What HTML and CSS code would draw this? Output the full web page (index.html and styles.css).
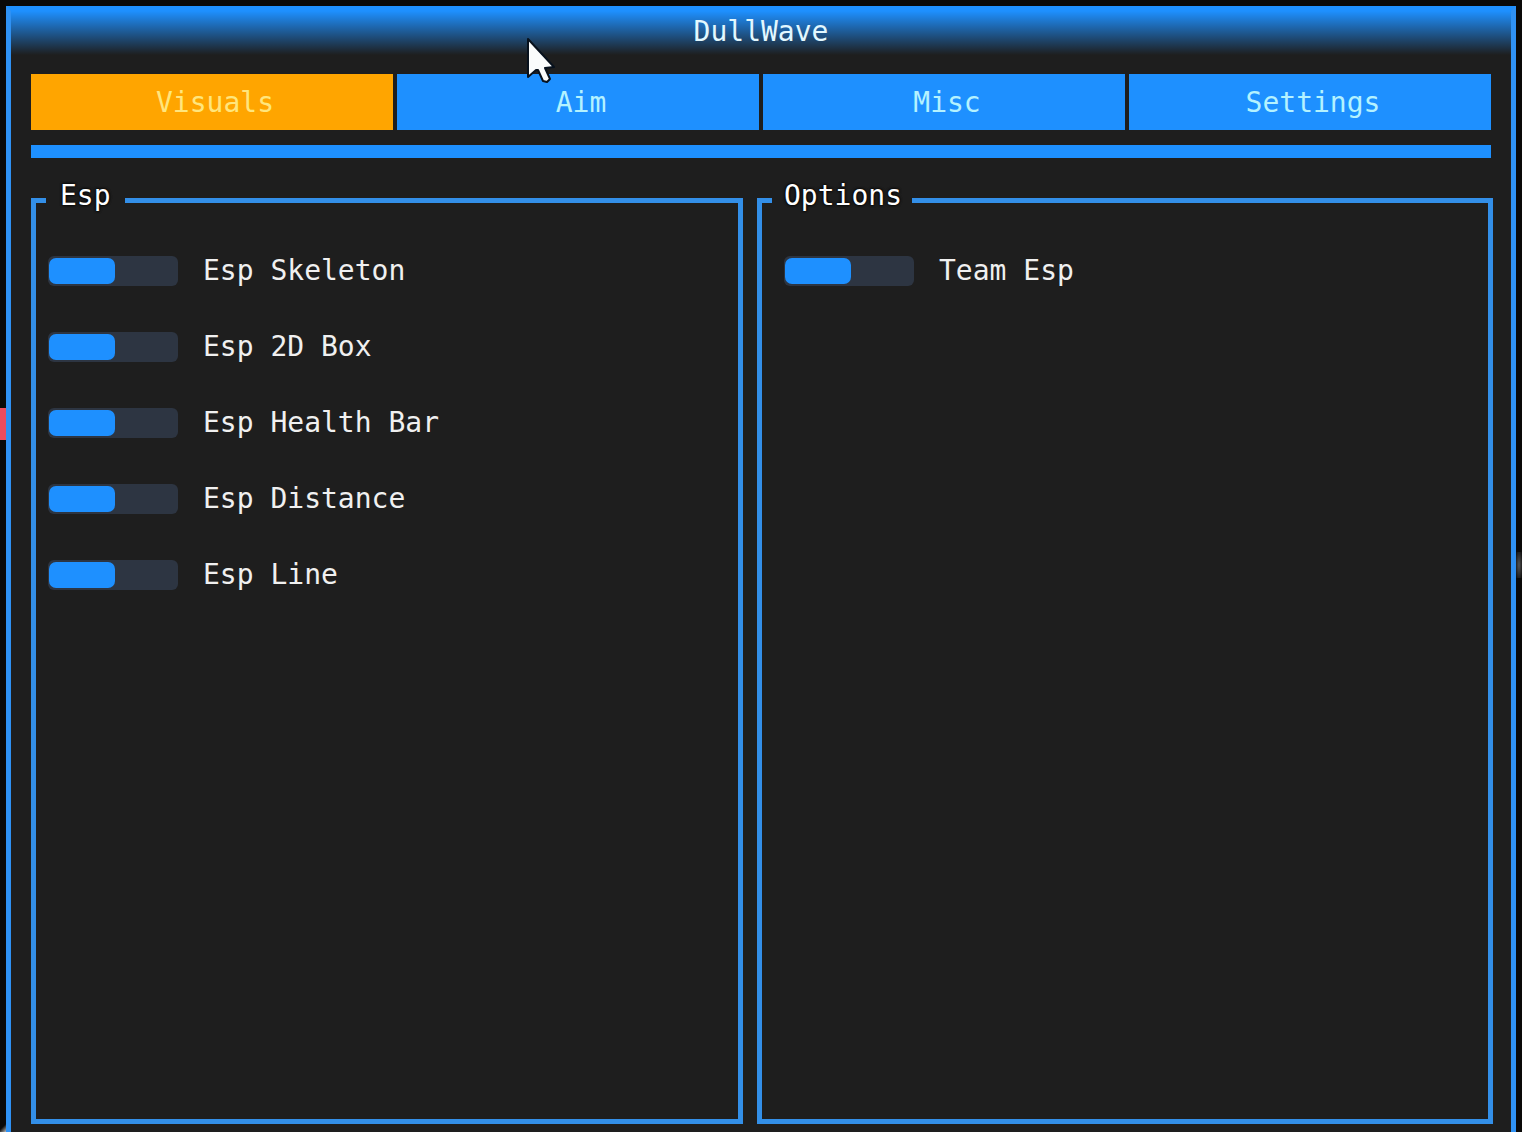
FILE: index.html
```html
<!DOCTYPE html>
<html lang="en">
<head>
<meta charset="utf-8">
<meta name="viewport" content="width=device-width, initial-scale=1">
<title>DullWave</title>
<link rel="stylesheet" href="styles.css">
</head>
<body>
<main class="window">
  <header class="titlebar"><h1 class="title">DullWave</h1></header>
  <nav class="tabs">
    <button class="tab tab-active" type="button">Visuals</button>
    <button class="tab" type="button">Aim</button>
    <button class="tab" type="button">Misc</button>
    <button class="tab" type="button">Settings</button>
  </nav>
  <div class="divider"></div>
  <div class="groups">
    <fieldset class="group">
      <legend class="legend">Esp</legend>
      <div class="options">
        <label class="option"><input class="toggle" type="checkbox">Esp Skeleton</label>
        <label class="option"><input class="toggle" type="checkbox">Esp 2D Box</label>
        <label class="option"><input class="toggle" type="checkbox">Esp Health Bar</label>
        <label class="option"><input class="toggle" type="checkbox">Esp Distance</label>
        <label class="option"><input class="toggle" type="checkbox">Esp Line</label>
      </div>
    </fieldset>
    <fieldset class="group group-wide">
      <legend class="legend">Options</legend>
      <div class="options">
        <label class="option"><input class="toggle" type="checkbox">Team Esp</label>
      </div>
    </fieldset>
  </div>
</main>
<div class="scene scene-red"></div>
<div class="scene scene-grey"></div>
<div class="scene scene-white"></div>
<svg class="cursor" width="32" height="48" viewBox="0 0 32 48" aria-hidden="true">
  <path d="M2 2V40L10 33H12L17 44L21 45L24 42L19 31L28 30Z" fill="#fafcfc" stroke="#07111d" stroke-width="2" stroke-linejoin="round"/>
</svg>
</body>
</html>
```
FILE: styles.css
```css
* {
  box-sizing: border-box;
}

body {
  position: relative;
  height: 100vh;
  margin: 0;
  padding: 6px 6px 0;
  overflow: hidden;
  background: #0a0908;
  color: #f0f0f0;
  font: 28px/32px "DejaVu Sans Mono", monospace;
}

.window {
  display: flex;
  flex-direction: column;
  height: 100%;
  padding-bottom: 8px;
  border: 5px solid #2f91f3;
  border-top-color: #1e90ff;
  border-bottom: 0;
  background: #1e1e1e;
}

.titlebar {
  height: 44px;
  padding-top: 5px;
  background: linear-gradient(#1e90ff, #1e1e1e);
  text-align: center;
}

.title {
  margin: 0;
  color: #e2f8ff;
  font: inherit;
}

.tabs {
  display: grid;
  grid-template-columns: repeat(4, 1fr);
  gap: 4px;
  margin: 19px 20px 15px;
}

.tab {
  height: 56px;
  padding: 2px 0 0 6px;
  border: 0;
  background: #1e90ff;
  color: #b4f2ff;
  font: inherit;
}

.tab-active {
  background: #ffa500;
  color: #ffe67d;
}

.divider {
  height: 13px;
  margin: 0 20px 22px;
  background: #1e90ff;
}

.groups {
  display: grid;
  flex: 1;
  grid-template-columns: 712fr 736fr;
  gap: 14px;
  margin: 0 18px 0 20px;
}

.group {
  min-width: 0;
  margin: 0;
  padding: 0 12px;
  border: 5px solid #338fe8;
}

.group-wide {
  padding: 0 22px;
}

.legend {
  margin-left: -2px;
  padding: 0 14px 8px;
  color: #fff;
  text-shadow: 0 0 3px #000, 0 0 3px #000;
}

.group-wide .legend {
  margin-left: -12px;
  padding: 0 10px 8px 12px;
}

.options {
  display: flex;
  flex-direction: column;
  gap: 44px;
  padding-top: 35px;
}

.option {
  display: flex;
  align-items: center;
  gap: 25px;
}

.toggle {
  display: flex;
  flex: none;
  width: 130px;
  height: 30px;
  margin: 0;
  padding: 2px 1px;
  border-radius: 6px;
  background: #2d3542;
  appearance: none;
}

.toggle::before {
  width: 66px;
  border-radius: 7px;
  background: #1e90ff;
  content: "";
}

.toggle:checked {
  justify-content: flex-end;
}

/* Parts of the game scene that show beside the window */
.scene {
  position: absolute;
}

.scene-red {
  top: 408px;
  left: 0;
  width: 6px;
  height: 32px;
  background: #ee4c5e;
}

.scene-grey {
  top: 552px;
  right: 0;
  width: 6px;
  height: 26px;
  background: radial-gradient(#555, transparent);
}

.scene-white {
  bottom: 0;
  left: 0;
  width: 6px;
  height: 8px;
  background: linear-gradient(135deg, transparent 40%, #bbb);
}

.cursor {
  position: absolute;
  top: 37px;
  left: 526px;
}
```
